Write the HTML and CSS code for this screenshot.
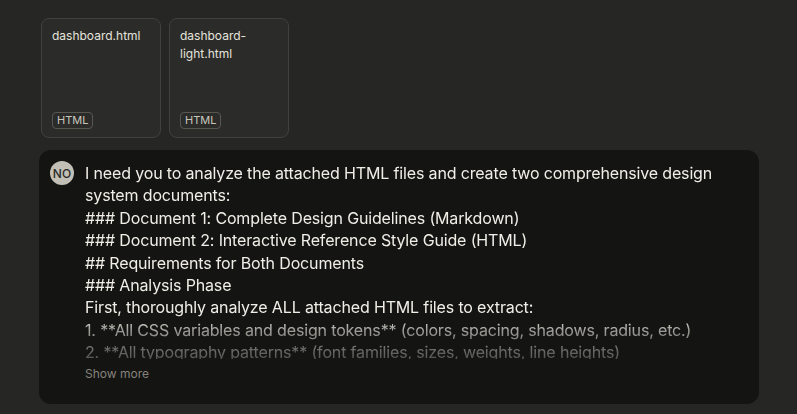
FILE: index.html
```html
<!DOCTYPE html>
<html>
<head>
<meta charset="utf-8">
<link rel="stylesheet" href="styles.css">
</head>
<body>
<div class="page">
  <div class="files">
    <div class="file-card">
      <div class="file-name">dashboard.html</div>
      <span class="badge">HTML</span>
    </div>
    <div class="file-card">
      <div class="file-name">dashboard-<br>light.html</div>
      <span class="badge">HTML</span>
    </div>
  </div>
  <div class="message">
    <div class="avatar">NO</div>
    <div class="body">
      <div class="text">
        <p>I need you to analyze the attached HTML files and create two comprehensive design system documents:</p>
        <p>### Document 1: Complete Design Guidelines (Markdown)</p>
        <p>### Document 2: Interactive Reference Style Guide (HTML)</p>
        <p>## Requirements for Both Documents</p>
        <p>### Analysis Phase</p>
        <p>First, thoroughly analyze ALL attached HTML files to extract:</p>
        <p>1. **All CSS variables and design tokens** (colors, spacing, shadows, radius, etc.)</p>
        <p>2. **All typography patterns** (font families, sizes, weights, line heights)</p>
      </div>
      <div class="show-more">Show more</div>
    </div>
  </div>
</div>
</body>
</html>
```
FILE: styles.css
```css
html, body {
  margin: 0;
  padding: 0;
  background: #262624;
}
body {
  font-family: Inter, "Noto Sans", sans-serif;
  color: #f0eee6;
}
.page {
  padding: 18px 38px 0 39px;
  display: flex;
  flex-direction: column;
  gap: 12px;
}
.files {
  display: flex;
  gap: 8px;
  padding-left: 2px;
}
.file-card {
  width: 118px;
  height: 118px;
  border: 1px solid #42413d;
  border-radius: 8px;
  background: #2b2b29;
  display: flex;
  flex-direction: column;
  justify-content: space-between;
}
.file-name {
  padding: 8px 10px 0 10px;
  font-size: 12px;
  line-height: 18px;
  color: #e6e4dc;
}
.badge {
  align-self: flex-start;
  margin: 0 0 8px 10px;
  font-size: 11px;
  line-height: 15px;
  padding: 0 4px;
  border: 1px solid #58574f;
  border-radius: 4px;
  color: #c8c6bd;
}
.message {
  background: #141413;
  border-radius: 12px;
  padding: 12px 10px 14px 11px;
  display: flex;
  gap: 11px;
  height: 228px;
}
.avatar {
  width: 24px;
  height: 24px;
  flex: none;
  border-radius: 50%;
  background: #c2c0b6;
  color: #2b2a27;
  font-size: 12px;
  font-weight: 500;
  display: flex;
  align-items: center;
  justify-content: center;
  margin-top: -1px;
}
.body {
  display: flex;
  flex-direction: column;
}
.text {
  height: 197px;
  overflow: hidden;
  font-size: 16px;
  line-height: 22.4px;
  letter-spacing: -0.15px;
  -webkit-mask-image: linear-gradient(to bottom, #000 0, #000 152px, rgba(0,0,0,0.6) 170px, rgba(0,0,0,0.3) 197px);
  mask-image: linear-gradient(to bottom, #000 0, #000 152px, rgba(0,0,0,0.6) 170px, rgba(0,0,0,0.3) 197px);
}
.text p {
  margin: 0;
  padding-right: 28px;
}
.show-more {
  margin-top: 7px;
  font-size: 12px;
  color: #85837c;
}
```
